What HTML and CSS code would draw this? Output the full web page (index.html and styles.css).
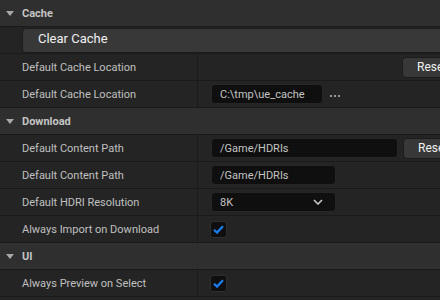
FILE: index.html
```html
<!DOCTYPE html>
<html>
<head>
    <meta charset="utf-8">
    <title>settings</title>
    <link rel="stylesheet" href="styles.css">
</head>
<body>
    <div class="panel">
        <div class="header">
            <span class="arrow"></span>
            <span class="title">Cache</span>
        </div>
        <div class="row wide">
            <button class="big-btn">Clear Cache</button>
        </div>
        <div class="row">
            <div class="label">Default Cache Location</div>
            <div class="value right">
                <button class="reset">Reset</button>
            </div>
        </div>
        <div class="row">
            <div class="label">Default Cache Location</div>
            <div class="value">
                <div class="field w-cache">C:\tmp\ue_cache</div>
                <span class="dots"><i></i><i></i><i></i></span>
            </div>
        </div>

        <div class="header">
            <span class="arrow"></span>
            <span class="title">Download</span>
        </div>
        <div class="row">
            <div class="label">Default Content Path</div>
            <div class="value">
                <div class="field w-long">/Game/HDRIs</div>
                <button class="reset">Reset</button>
            </div>
        </div>
        <div class="row">
            <div class="label">Default Content Path</div>
            <div class="value">
                <div class="field w-mid">/Game/HDRIs</div>
            </div>
        </div>
        <div class="row">
            <div class="label">Default HDRI Resolution</div>
            <div class="value">
                <div class="field w-mid combo">
                    <span>8K</span>
                    <svg width="10" height="6" viewBox="0 0 10 6"><path d="M1 1 L5 5 L9 1" fill="none" stroke="#c8c8c8" stroke-width="1.6"/></svg>
                </div>
            </div>
        </div>
        <div class="row">
            <div class="label">Always Import on Download</div>
            <div class="value">
                <span class="check"><svg width="11" height="9" viewBox="0 0 11 9"><path d="M1 4.8 L4 7.6 L10 1.2" fill="none" stroke="#1a7ff0" stroke-width="2.2"/></svg></span>
            </div>
        </div>

        <div class="header">
            <span class="arrow"></span>
            <span class="title">UI</span>
        </div>
        <div class="row">
            <div class="label">Always Preview on Select</div>
            <div class="value">
                <span class="check"><svg width="11" height="9" viewBox="0 0 11 9"><path d="M1 4.8 L4 7.6 L10 1.2" fill="none" stroke="#1a7ff0" stroke-width="2.2"/></svg></span>
            </div>
        </div>
    </div>
</body>
</html>
```

FILE: styles.css
```css
body {
    margin: 0;
    background: #242424;
    font-family: Roboto, "Liberation Sans", sans-serif;
    overflow: hidden;
}
.panel {
    width: 440px;
    height: 300px;
    overflow: hidden;
}
.header {
    height: 26px;
    background: #2f2f2f;
    border-bottom: 1px solid #1a1a1a;
    display: flex;
    align-items: center;
}
.arrow {
    width: 0;
    height: 0;
    margin-left: 6px;
    margin-right: 8px;
    border-left: 4px solid transparent;
    border-right: 4px solid transparent;
    border-top: 5px solid #a8a8a8;
}
.title {
    font-size: 11px;
    font-weight: bold;
    color: #c4c4c4;
}
.row {
    height: 26px;
    background: #242424;
    border-bottom: 1px solid #1a1a1a;
    display: flex;
}
.row.wide {
    padding-left: 22px;
    align-items: flex-start;
}
.big-btn {
    flex: none;
    width: 440px;
    height: 25px;
    margin-top: 1px;
    padding: 0 0 5px 15px;
    text-align: left;
    background: #383838;
    border: 1px solid #1c1c1c;
    border-radius: 4px;
    color: #f0f0f0;
    font-family: Roboto, "Liberation Sans", sans-serif;
    font-size: 13px;
}
.label {
    width: 175px;
    flex: none;
    padding-left: 22px;
    border-right: 1px solid #1a1a1a;
    display: flex;
    align-items: center;
    font-size: 11px;
    color: #c0c0c0;
}
.value {
    flex: 1;
    display: flex;
    align-items: center;
    padding-left: 13px;
    min-width: 0;
}
.value.right {
    justify-content: flex-end;
}
.field {
    flex: none;
    height: 18px;
    box-sizing: content-box;
    background: #0f0f0f;
    border: 1px solid #262626;
    border-radius: 4px;
    display: flex;
    align-items: center;
    padding: 0 8px;
    font-size: 11px;
    color: #c4c4c4;
}
.w-cache { width: 94px; }
.w-long { width: 169px; }
.w-mid { width: 107px; }
.combo {
    justify-content: space-between;
    padding-right: 12px;
    width: 103px;
}
.dots {
    display: flex;
    gap: 2px;
    margin-left: 7px;
    margin-top: 4px;
}
.dots i {
    width: 2px;
    height: 2px;
    border-radius: 1px;
    background: #c0c0c0;
}
.reset {
    flex: none;
    width: 60px;
    height: 21px;
    margin-left: 5px;
    margin-right: -22px;
    padding: 0 0 1px 14px;
    text-align: left;
    background: #383838;
    border: 1px solid #1c1c1c;
    border-radius: 4px;
    color: #f0f0f0;
    font-family: Roboto, "Liberation Sans", sans-serif;
    font-size: 12px;
}
.value.right .reset {
    margin-right: -22px;
}
.check {
    width: 15px;
    height: 15px;
    margin-left: -1px;
    background: #0f0f0f;
    border: 1px solid #2e2e2e;
    border-radius: 3px;
    display: flex;
    align-items: center;
    justify-content: center;
}
```
